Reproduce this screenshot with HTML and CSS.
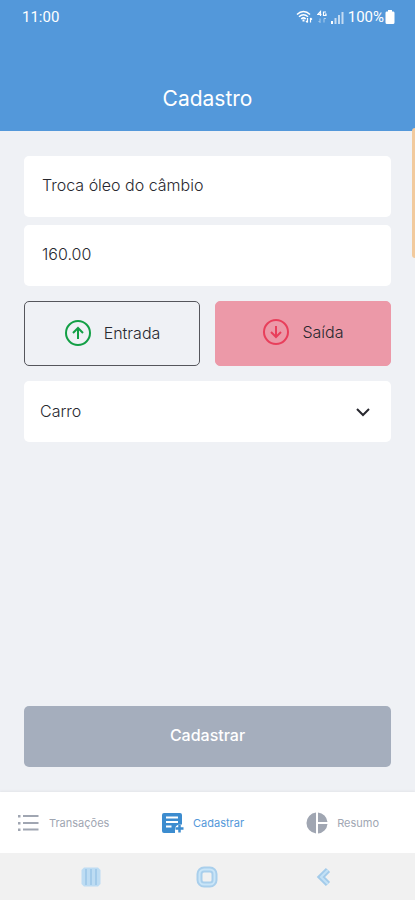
FILE: index.html
```html
<!DOCTYPE html>
<html lang="pt-BR">
<head>
    <meta charset="UTF-8">
    <meta name="viewport" content="width=device-width, initial-scale=1.0">
    <title>Cadastro</title>
    <link rel="stylesheet" href="styles.css">
</head>
<body>

    <header class="header">
        <div class="status-bar">
            <span>11:00</span>
            <div class="status-icons">
                <svg width="17" height="14" viewBox="0 0 17 14" fill="none" stroke="currentColor" stroke-width="1.5">
                    <path d="M1 4.5C5 .5 10 .5 14 4.5M3 6.8c3-2.8 6-2.8 9 0M5.2 9c1.5-1.5 3-1.5 4.500 0"/>
                    <path d="M7.500 9.500v2" stroke-width="2"/>
                    <path d="M11.500 8v4.500M10 11l1.500 1.500M14.500 12.500V8M16 9.500L14.500 8" stroke-width="1.200"/>
                </svg>
                <svg width="10" height="14" viewBox="0 0 10 14" fill="none" stroke="currentColor">
                    <path d="M3.500 6V1.500L.8 4.500h3.700M9 2H6.500v3.500H9V4H8" stroke-width="1.200"/>
                    <path d="M3 8.500v4M1.500 11L3 12.500M7 12.500v-4h2" opacity=".5"/>
                </svg>
                <svg width="13" height="13" viewBox="0 0 13 13" fill="currentColor">
                    <path d="M0 10h2v3H0z"/>
                    <path d="M3.500 7h2v6h-2zM7 4h2v9H7zM10.500 1h2v12h-2z" opacity=".65"/>
                </svg>
                <span class="battery-level">100%</span>
                <svg width="10" height="14" viewBox="0 0 10 14" fill="currentColor">
                    <path d="M3 0h4v1.500h1.500Q9.500 1.500 9.500 3v9.500Q9.500 14 8 14H2Q.5 14 .5 12.500V3Q.5 1.500 1.500 1.500H3z"/>
                </svg>
            </div>
        </div>
        <h1 class="title">Cadastro</h1>
    </header>

    <div class="edge-panel"></div>

    <form class="form">
        <div class="fields">
            <input class="field" type="text" aria-label="Nome" value="Troca óleo do câmbio">
            <input class="field" type="text" inputmode="decimal" aria-label="Preço" value="160.00">
        </div>

        <div class="types">
            <button class="type type-up" type="button">
                <svg width="28" height="28" viewBox="0 0 28 28" fill="none" stroke="#129f45" stroke-width="2">
                    <circle cx="14" cy="14" r="12"/>
                    <path d="M14 20V9M9 14l5-5 5 5"/>
                </svg>
                Entrada
            </button>
            <button class="type type-down" type="button">
                <svg width="28" height="28" viewBox="0 0 28 28" fill="none" stroke="#e83f5b" stroke-width="2">
                    <circle cx="14" cy="14" r="12"/>
                    <path d="M14 8v11M9 14l5 5 5-5"/>
                </svg>
                Saída
            </button>
        </div>

        <div class="category">
            <select class="field category-select" aria-label="Categoria">
                <option>Carro</option>
            </select>
            <svg class="chevron" width="16" height="10" viewBox="0 0 16 10" fill="none" stroke="#28282f" stroke-width="2">
                <path d="M2 2l6 6 6-6"/>
            </svg>
        </div>

        <button class="submit" type="submit">Cadastrar</button>
    </form>

    <nav class="tabs">
        <a class="tab" href="#transacoes">
            <svg width="22" height="22" viewBox="0 0 22 22" fill="currentColor">
                <path d="M0 3h2.500v2.500H0zM0 10h2.500v2.500H0zM0 16.500h2.500V19H0zM5 3h15.500v2H5zM5 10h15.500v2H5zM5 16.500h15.500v2H5z"/>
            </svg>
            Transações
        </a>
        <a class="tab tab-active" href="#cadastrar">
            <svg width="22" height="22" viewBox="0 0 22 22">
                <path d="M2 1h16q2 0 2 2v9.500h-3q-4 1-4 5V21H2q-2 0-2-2V3q0-2 2-2z" fill="#3c8ccf"/>
                <path d="M4 5.500h12M4 10h12M4 14.500h5.500" stroke="#fff" stroke-width="2"/>
                <path d="M17.500 12.500v8M13.500 16.500h8" stroke="#3c8ccf" stroke-width="2.500"/>
            </svg>
            Cadastrar
        </a>
        <a class="tab" href="#resumo">
            <svg width="22" height="22" viewBox="0 0 22 22" fill="currentColor">
                <path d="M10 .5v21A10.550 10.550 0 0 1 10 .5zM12 .5A10.500 10.500 0 0 1 21.500 10H12zM12 12h9.500A10.500 10.500 0 0 1 12 21.500z"/>
            </svg>
            Resumo
        </a>
    </nav>

    <div class="system-bar">
        <button class="system-button" type="button" aria-label="Recentes">
            <svg width="22" height="22" viewBox="0 0 22 22">
                <path d="M4 1.500h14l2.500 2.500v14L18 20.500H4L1.500 18V4z" fill="#bddcf3"/>
                <path d="M6 3v16M11 3v16M16 3v16" stroke="#a3cbea" stroke-width="2"/>
            </svg>
        </button>
        <button class="system-button" type="button" aria-label="Início">
            <svg width="22" height="22" viewBox="0 0 22 22" fill="none">
                <rect x="3.500" y="3.500" width="15" height="15" rx="4.500" stroke="#a9cfec" stroke-width="6"/>
                <rect x="3.500" y="3.500" width="15" height="15" rx="4.500" stroke="#c9e5f8" stroke-width="2"/>
            </svg>
        </button>
        <button class="system-button" type="button" aria-label="Voltar">
            <svg width="22" height="22" viewBox="0 0 22 22" fill="none">
                <path d="M15 4l-7 7 7 7" stroke="#a3cbea" stroke-width="6"/>
                <path d="M15 4l-7 7 7 7" stroke="#c3e1f6" stroke-width="2"/>
            </svg>
        </button>
    </div>

</body>
</html>
```

FILE: styles.css
```css
* {
    box-sizing: border-box;
}

body {
    display: flex;
    flex-direction: column;
    min-height: 100vh;
    margin: 0;
    font-family: Inter, "Open Sans", sans-serif;
    font-size: 16px;
    background-color: #eff1f5;
}

button, input, select {
    font: inherit;
}

svg {
    flex-shrink: 0;
}

.header {
    background-color: #5398da;
    color: #fff;
}

.status-bar {
    display: flex;
    justify-content: space-between;
    align-items: center;
    height: 34px;
    padding: 0 20px 0 22px;
    font-family: Roboto, sans-serif;
    font-size: 15px;
}

.status-icons {
    display: flex;
    align-items: center;
    gap: 4px;
}

.battery-level {
    margin-right: -3px;
}

.title {
    margin: 0;
    padding: 50px 24px 17px;
    font-size: 21px;
    line-height: 30px;
    font-weight: 400;
    text-align: center;
}

/* alça do painel lateral */
.edge-panel {
    position: absolute;
    top: 128px;
    right: 0;
    width: 3px;
    height: 130px;
    border-radius: 3px 0 0 3px;
    background-color: #f2ca9d;
}

.form {
    flex: 1;
    display: flex;
    flex-direction: column;
    gap: 15px;
    padding: 25px 24px;
    font-weight: 300;
}

.fields {
    display: flex;
    flex-direction: column;
    gap: 8px;
}

.field {
    width: 100%;
    height: 61px;
    padding: 0 18px 4px;
    border: 0;
    border-radius: 5px;
    background-color: #fff;
    color: #28282f;
}

.types {
    display: flex;
    gap: 15px;
}

.type {
    flex: 1;
    display: flex;
    justify-content: center;
    align-items: center;
    gap: 12px;
    height: 65px;
    padding: 0 0 2px;
    border: 1px solid #55565c;
    border-radius: 5px;
    background-color: transparent;
    color: #28282f;
}

.type-down {
    padding-bottom: 4px;
    border-color: #ec99a8;
    background-color: #ec99a8;
}

.category {
    position: relative;
}

.category-select {
    appearance: none;
    padding: 0 48px 2px 16px;
}

.chevron {
    position: absolute;
    top: 26px;
    right: 20px;
    pointer-events: none;
}

.submit {
    height: 61px;
    margin-top: auto;
    padding: 0 0 4px;
    border: 0;
    border-radius: 5px;
    background-color: #a5aebd;
    color: #fff;
    font-weight: 500;
}

.tabs {
    display: flex;
    height: 61px;
    padding: 0 36px 0 18px;
    background-color: #fff;
    box-shadow: 0 -1px 2px #e3e5ea;
}

.tab {
    flex: 1;
    display: flex;
    align-items: center;
    gap: 9px;
    color: #a0a6b2;
    font-size: 11px;
    text-decoration: none;
}

.tab:last-child {
    flex: none;
}

.tab-active {
    color: #5398da;
}

.system-bar {
    display: flex;
    justify-content: space-around;
    height: 47px;
    padding: 0 33px;
    background-color: #f1f1f1;
}

.system-button {
    display: flex;
    align-items: center;
    padding: 0;
    border: 0;
    background: none;
}
```
